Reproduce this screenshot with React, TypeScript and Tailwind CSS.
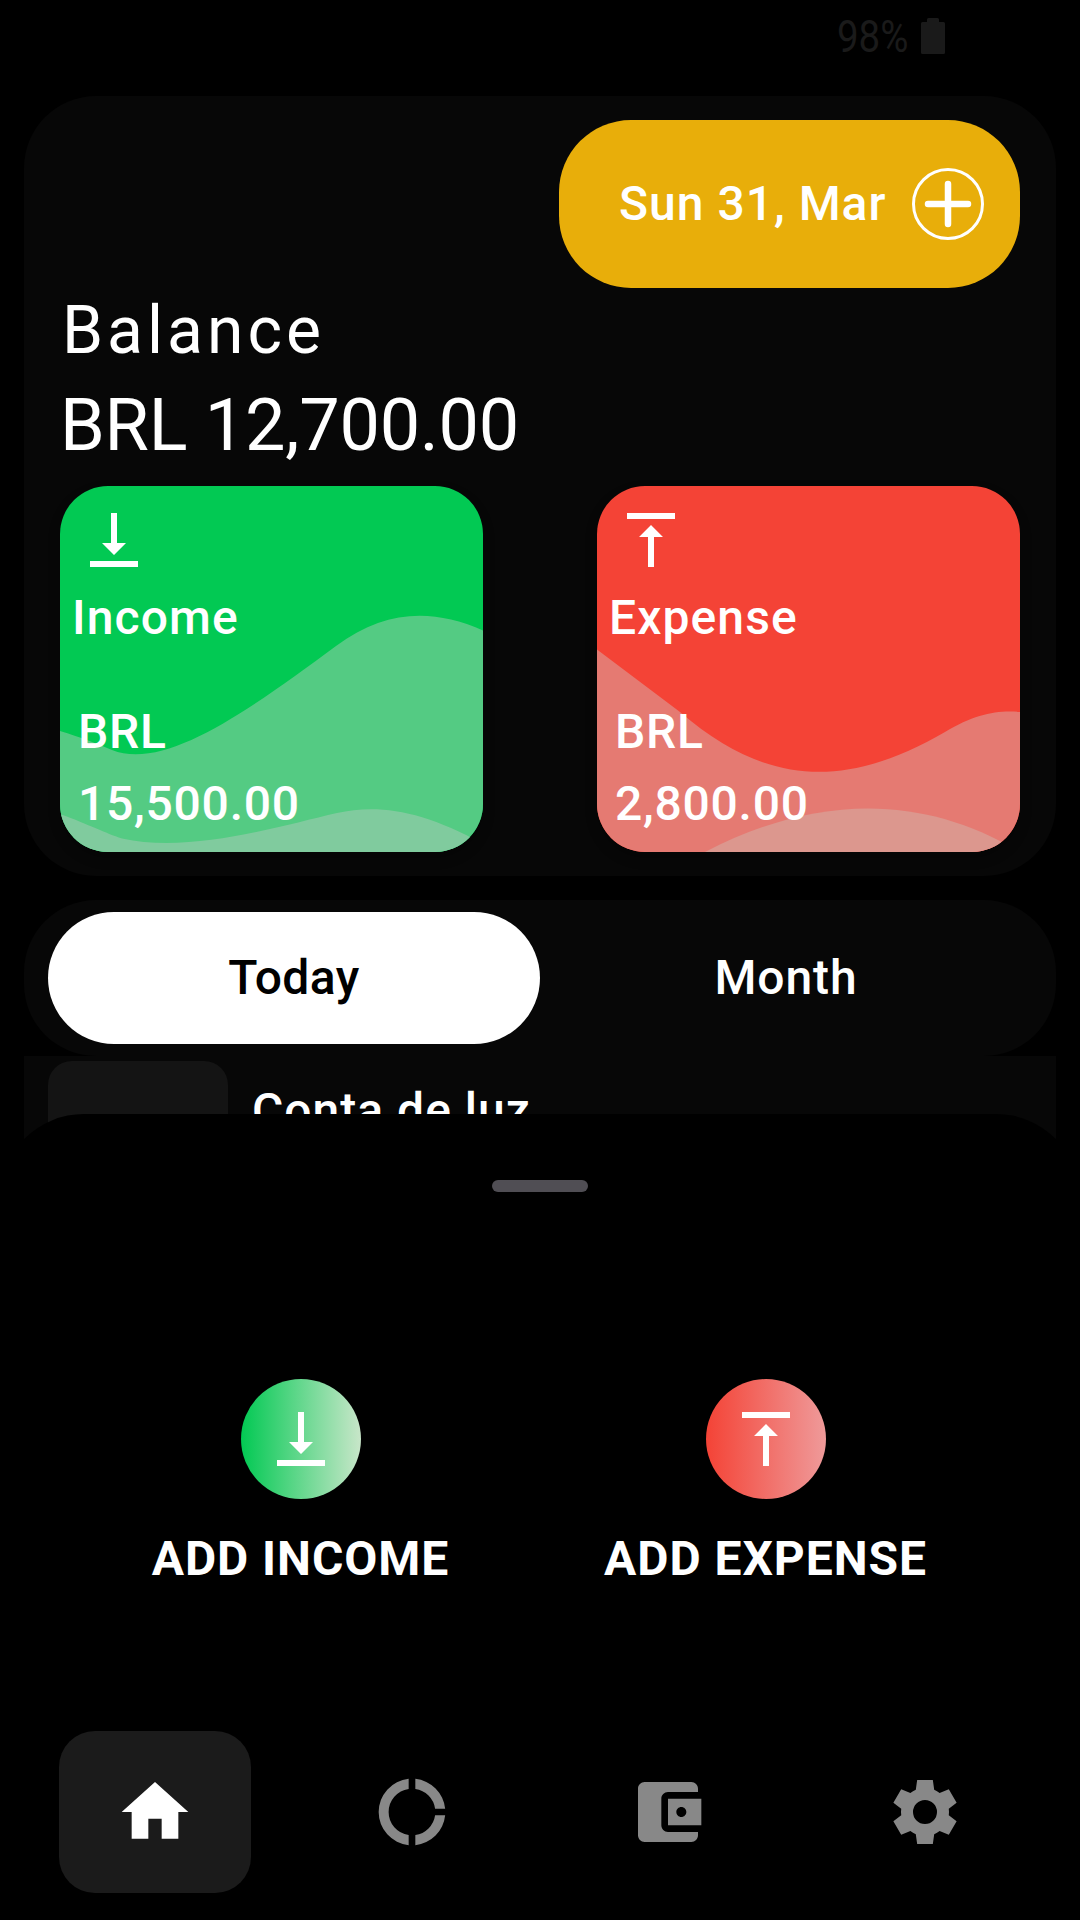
import React from "react";

const ICON_DOWN = "M16 13h-3V3h-2v10H8l4 4 4-4zM4 19v2h16v-2H4z";
const ICON_UP = "M8 11h3v10h2V11h3l-4-4-4 4zM4 3v2h16V3H4z";

function Icon({ d, className }: { d: string; className: string }) {
  return (
    <svg viewBox="0 0 24 24" className={className} fill="currentColor" aria-hidden="true">
      <path d={d} fillRule="evenodd" />
    </svg>
  );
}

function StatusBar() {
  return (
    <div className="flex h-24 items-start text-[#1a1a1a]">
      <div className="ml-[837px] w-[84px] pt-[11px]">
        <span className="inline-block origin-left scale-x-[0.855] text-[45px] leading-[52px]">98%</span>
      </div>
      <svg viewBox="0 0 24 36" className="mt-[18px] h-9 w-6" fill="currentColor" aria-hidden="true">
        <path d="M7.5 0h9a1.500 1.500 0 0 1 1.500 1.500V4h4.500a1.500 1.500 0 0 1 1.500 1.500v29a1.500 1.500 0 0 1-1.500 1.500h-21a1.500 1.500 0 0 1-1.500-1.500v-29A1.500 1.500 0 0 1 1.500 4H6V1.500A1.500 1.500 0 0 1 7.500 0z" />
      </svg>
    </div>
  );
}

type StatProps = {
  title: string;
  amount: string;
  icon: string;
  card: string;
  back: string;
  front: string;
  backColor: string;
  frontColor: string;
};

function StatCard({ title, amount, icon, card, back, front, backColor, frontColor }: StatProps) {
  return (
    <div className={`relative h-[366px] w-[423px] overflow-hidden rounded-[48px] ${card}`}>
      <svg viewBox="0 0 423 366" className="absolute inset-0 h-full w-full" aria-hidden="true">
        <path d={back} fill={backColor} />
        <path d={front} fill={frontColor} />
      </svg>
      <div className="relative flex h-full flex-col pb-3 pt-[18px] font-medium text-white">
        <Icon d={icon} className="ml-[18px] size-[72px]" />
        <div className="ml-3 mt-[6px] text-5xl leading-[72px] tracking-[1.1px]">{title}</div>
        <div className="ml-[18px] mt-auto text-5xl leading-[72px] tracking-[0.75px]">
          <div>BRL</div>
          <div>{amount}</div>
        </div>
      </div>
    </div>
  );
}

function BalanceCard() {
  return (
    <section className="mx-6 flex h-[780px] flex-col rounded-[72px] bg-[#070707] pt-6">
      <div className="mr-9 flex h-[168px] w-[461px] items-center gap-[26px] self-end rounded-[72px] bg-[#e8ae0a] pl-[60px]">
        <span className="w-[267px] whitespace-nowrap text-5xl font-medium leading-[72px] tracking-[1px]">Sun 31, Mar</span>
        <svg viewBox="0 0 72 72" className="size-[72px]" fill="none" stroke="currentColor" aria-hidden="true">
          <circle cx="36" cy="36" r="34.500" strokeWidth="3" />
          <path d="M16 36h40M36 16v40" strokeWidth="6.500" strokeLinecap="round" />
        </svg>
      </div>
      <div className="ml-[38px] mt-px text-[66px] leading-[83px] tracking-[4px]">Balance</div>
      <div className="ml-9 mt-[6px] text-7xl leading-[96px] tracking-[-0.25px]">BRL 12,700.00</div>
      <div className="ml-9 mr-9 mt-3 flex justify-between">
        <StatCard
          title="Income"
          amount="15,500.00"
          icon={ICON_DOWN}
          card="bg-[#02c953] shadow-[0_6px_12px_rgba(0,0,0,0.3)]"
          back="M0 245C20 251 38 258 52 264C105 285 188 225 276 160C325 124 372 122 423 144.500V366H0z"
          front="M0 328C30 339 45 347 62 352.500C130 368 220 340 277 327C318 318 362 324 423 358V366H0z"
          backColor="#54cb83"
          frontColor="#80cb9e"
        />
        <StatCard
          title="Expense"
          amount="2,800.00"
          icon={ICON_UP}
          card="bg-[#f44336] shadow-[0_6px_12px_rgba(0,0,0,0.3)]"
          back="M0 163.500L83 226C170 301 250 303 348 246C378 228 400 224 423 226V366H0z"
          front="M108 366C220 308 326 308 423 366z"
          backColor="#e57a72"
          frontColor="#dc978e"
        />
      </div>
    </section>
  );
}

function PeriodTabs() {
  return (
    <div className="mx-6 mt-6 flex h-[156px] items-center rounded-[72px] bg-[#070707] px-6 text-5xl font-medium">
      <button className="h-[132px] w-[492px] rounded-[66px] bg-white tracking-[0.45px] text-black">Today</button>
      <button className="h-[132px] w-[492px] tracking-[0.9px]">Month</button>
    </div>
  );
}

function TransactionList() {
  return (
    <div className="mx-6 flex h-[180px] gap-6 bg-[#070707] pl-6 pt-[5px]">
      <div className="h-[168px] w-[180px] rounded-3xl bg-[#141414]" />
      <div className="pt-[14px] text-5xl font-medium leading-[72px] tracking-[1px]">Conta de luz</div>
    </div>
  );
}

function AddAction({ label, icon, gradient }: { label: string; icon: string; gradient: string }) {
  return (
    <button className="flex w-[465px] flex-col items-center">
      <span className={`flex size-[120px] items-center justify-center rounded-full ${gradient}`}>
        <Icon d={icon} className="size-[72px]" />
      </span>
      <span className="mt-6 text-5xl font-bold leading-[72px] tracking-[0.95px]">{label}</span>
    </button>
  );
}

const NAV = [
  { name: "Home", d: "M10 20v-6h4v6h5v-8h3L12 3 2 12h3v8z", active: true },
  {
    name: "Statistics",
    d: "M11 5.070V2.050A10 10 0 0 0 11 21.950V18.930A7 7 0 0 1 11 5.070zM18.930 11H21.950A10 10 0 0 0 13 2.050V5.070A7 7 0 0 1 18.930 11zM13 18.930V21.950A10 10 0 0 0 21.950 13H18.930A7 7 0 0 1 13 18.930z",
    active: false,
  },
  {
    name: "Wallet",
    d: "M21 18v1c0 1.1-.9 2-2 2H5c-1.11 0-2-.9-2-2V5c0-1.1.89-2 2-2h14c1.1 0 2 .9 2 2v1h-9c-1.11 0-2 .9-2 2v8c0 1.1.89 2 2 2h9zm-9-2h10V8H12v8zm4-2.500c-.83 0-1.500-.67-1.500-1.500s.67-1.500 1.500-1.500 1.500.67 1.500 1.500-.67 1.500-1.500 1.500z",
    active: false,
  },
  {
    name: "Settings",
    d: "M9.650 2.400L14.350 2.400L14.760 5.350C15.340 5.600 15.880 5.920 16.380 6.290L19.140 5.170L21.490 9.230L19.130 11.060C19.230 11.680 19.230 12.320 19.130 12.940L21.490 14.770L19.140 18.830L16.380 17.710C15.880 18.080 15.340 18.400 14.760 18.650L14.350 21.600L9.650 21.600L9.240 18.650C8.660 18.400 8.120 18.080 7.620 17.710L4.860 18.830L2.510 14.770L4.870 12.940C4.770 12.320 4.770 11.680 4.870 11.060L2.510 9.230L4.860 5.170L7.620 6.290C8.120 5.920 8.660 5.600 9.240 5.350zM12 15.600A3.600 3.600 0 1 0 12 8.400A3.600 3.600 0 1 0 12 15.600z",
    active: false,
  },
];

function BottomNav() {
  return (
    <nav className="mt-auto flex justify-between px-[59px] pb-[27px]">
      {NAV.map((item) => (
        <button
          key={item.name}
          aria-label={item.name}
          className={
            item.active
              ? "flex h-[162px] w-48 items-center justify-center rounded-[36px] bg-[#1b1b1b] text-white"
              : "flex h-[162px] w-48 items-center justify-center rounded-[36px] text-[#888888]"
          }
        >
          <Icon d={item.d} className="size-20" />
        </button>
      ))}
    </nav>
  );
}

function AddSheet() {
  return (
    <div className="absolute inset-x-0 bottom-0 top-[1114px] flex flex-col rounded-t-[84px] bg-black">
      <div className="mt-[66px] h-3 w-24 self-center rounded-md bg-[#504e54]" />
      <div className="mt-[187px] flex pl-[68px]">
        <AddAction label="ADD INCOME" icon={ICON_DOWN} gradient="bg-[linear-gradient(90deg,#02c953,#c8e6c9)]" />
        <AddAction label="ADD EXPENSE" icon={ICON_UP} gradient="bg-[linear-gradient(90deg,#f44336,#ef9a9a)]" />
      </div>
      <BottomNav />
    </div>
  );
}

export default function App() {
  return (
    <main className="relative h-[1920px] w-[1080px] overflow-hidden bg-black font-['Roboto',sans-serif] text-white">
      <StatusBar />
      <BalanceCard />
      <PeriodTabs />
      <TransactionList />
      <AddSheet />
    </main>
  );
}
